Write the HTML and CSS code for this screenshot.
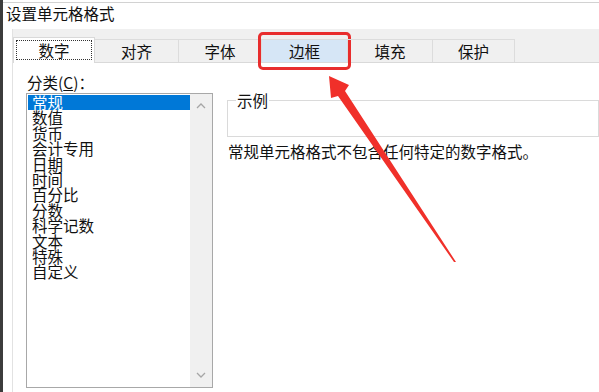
FILE: index.html
```html
<!DOCTYPE html>
<html lang="zh-CN">
<head>
<meta charset="utf-8">
<title>设置单元格格式</title>
<link rel="stylesheet" href="styles.css">
</head>
<body>
<div class="win">
  <div class="topline"></div>
  <div class="title">设置单元格格式</div>
  <div class="dialog">
    <div class="tabbar">
      <div class="tab sel w82"><span class="focus">数字</span></div>
      <div class="tab w84">对齐</div>
      <div class="tab w83">字体</div>
      <div class="tab hover w86">边框<span class="mark"></span></div>
      <div class="tab w85">填充</div>
      <div class="tab w82">保护</div>
    </div>
    <div class="panel">
      <div class="left">
        <div class="label">分类(<u>C</u>)：</div>
        <div class="listbox">
          <ul class="items">
            <li class="selected">常规</li>
            <li>数值</li>
            <li>货币</li>
            <li>会计专用</li>
            <li>日期</li>
            <li>时间</li>
            <li>百分比</li>
            <li>分数</li>
            <li>科学记数</li>
            <li>文本</li>
            <li>特殊</li>
            <li>自定义</li>
          </ul>
          <div class="scroll">
            <svg class="chev" width="10" height="6" viewBox="0 0 10 6"><path d="M1 5 L5 1 L9 5" fill="none" stroke="#a6a6a6" stroke-width="1.3"/></svg>
            <svg class="chev" width="10" height="6" viewBox="0 0 10 6"><path d="M1 1 L5 5 L9 1" fill="none" stroke="#a6a6a6" stroke-width="1.3"/></svg>
          </div>
        </div>
      </div>
      <div class="right">
        <fieldset class="sample"><legend>示例</legend><div class="sample-body"></div></fieldset>
        <p class="desc">常规单元格格式不包含任何特定的数字格式。</p>
      </div>
    </div>
  </div>
  <svg class="arrow" width="599" height="392" viewBox="0 0 599 392">
    <polygon points="329,76 349,85 345,91 456,262 454,262 338,96 331,98" fill="#f0302a"/>
  </svg>
</div>
</body>
</html>
```

FILE: styles.css
```css
html, body {
  margin: 0;
  padding: 0;
}
body {
  font-family: "Noto Sans CJK SC", "Noto Sans", sans-serif;
  color: #111;
  background: #fff;
}
.win {
  position: relative;
  width: 599px;
  height: 392px;
  box-sizing: border-box;
  border-left: 3px solid #3c3c3c;
  overflow: hidden;
  display: flex;
  flex-direction: column;
}
.topline {
  margin-top: 2px;
  height: 1px;
  background: #d2d2d2;
}
.title {
  font-size: 15.5px;
  line-height: 20px;
  height: 20px;
  padding: 0 0 6px 3px;
}
.dialog {
  flex: 1;
  margin-left: 9px;
  border-left: 1px solid #e2e2e2;
  display: flex;
  flex-direction: column;
}
.tabbar {
  height: 33px;
  background: #f0f0f0;
  border-bottom: 1px solid #d9d9d9;
  display: flex;
  align-items: flex-end;
}
.tab {
  box-sizing: border-box;
  height: 23px;
  border-top: 1px solid #dcdcdc;
  border-right: 1px solid #dcdcdc;
  display: flex;
  align-items: center;
  justify-content: center;
  font-size: 15.5px;
  position: relative;
}
.w82 { width: 82px; }
.w83 { width: 83px; }
.w84 { width: 84px; }
.w85 { width: 85px; }
.w86 { width: 86px; }
.tab.sel {
  height: 26px;
  margin-bottom: -1px;
  background: #fff;
  border: 1px solid #d9d9d9;
  border-bottom: none;
  padding: 2px 2px 3px 2px;
  align-items: stretch;
}
.focus {
  flex: 1;
  border: 1px dotted #333;
  display: flex;
  align-items: center;
  justify-content: center;
}
.tab.hover {
  background: #d6e6f6;
}
.mark {
  position: absolute;
  left: -4px;
  top: -8px;
  width: 93px;
  height: 38px;
  box-sizing: border-box;
  border: 3px solid #e82c2c;
  border-radius: 5px;
}
.panel {
  flex: 1;
  display: flex;
  padding-left: 13px;
  background: #fff;
}
.left {
  width: 187px;
  display: flex;
  flex-direction: column;
  padding-top: 8px;
}
.label {
  font-size: 15.5px;
  line-height: 22px;
  height: 22px;
  padding-left: 1px;
}
.listbox {
  height: 295px;
  box-sizing: border-box;
  border: 1px solid #a8a8a8;
  display: flex;
}
.items {
  flex: 1;
  list-style: none;
  margin: 0;
  padding: 1px 0 0 1px;
}
.items li {
  font-size: 15.5px;
  line-height: 15.4px;
  height: 15.4px;
  padding-left: 4px;
  white-space: nowrap;
}
.items li.selected {
  background: #0078d7;
  color: #fff;
}
.scroll {
  width: 22px;
  background: #f0f0f0;
  display: flex;
  flex-direction: column;
  justify-content: space-between;
  align-items: center;
  padding: 9px 0 9px 0;
  box-sizing: border-box;
}
.chev {
  display: block;
}
.right {
  flex: 1;
  margin-left: 14px;
  padding-top: 27px;
}
.sample {
  margin: 0;
  padding: 0;
  border: 1px solid #dadada;
  min-width: 0;
}
.sample legend {
  font-size: 15.5px;
  line-height: 20px;
  padding: 0 1px;
  margin-left: 8px;
}
.sample-body {
  height: 26px;
}
.desc {
  margin: 4px 0 0 1px;
  font-size: 15.5px;
  line-height: 20px;
}
.arrow {
  position: absolute;
  top: 0;
  left: -3px;
  pointer-events: none;
}
```
